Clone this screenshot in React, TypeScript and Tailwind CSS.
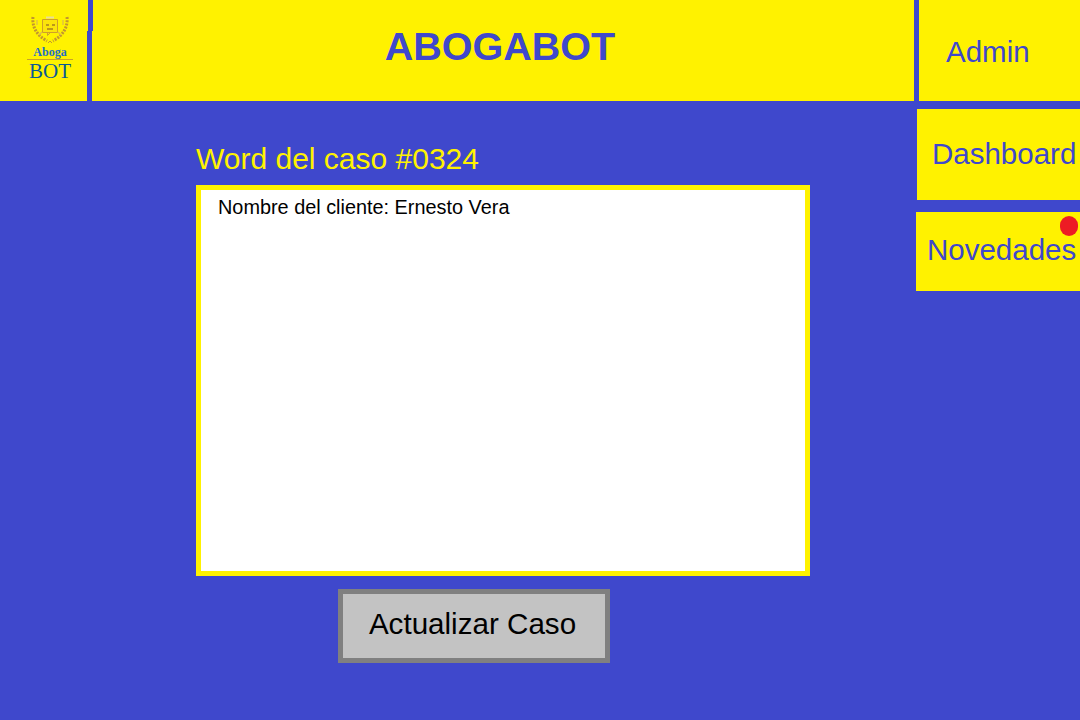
const SANS = "font-['Liberation_Sans',Arial,sans-serif]";

function Logo() {
  return (
    <div className="relative flex w-[87px] shrink-0 flex-col items-center bg-[#fff200] pt-[16px] pl-[13px]">
      {/* robot and laurel */}
      <svg width="40" height="29" viewBox="0 0 40 29" fill="none">
        <path d="M16 1.500h8" stroke="#e9dc9a" strokeWidth="2" />
        <path d="M12.500 3.500h15v13h-15zM17.500 16.500v3l3-3" stroke="#cf9f2a" strokeWidth="1" fill="#fbe40c" />
        <path d="M16 9h3M22 9h3M17 13h6" stroke="#a8801f" strokeWidth="1.500" />
        <g stroke="#c2952f" strokeWidth="3" strokeDasharray="2 1.200">
          <path d="M3 1c-1 9 3 18 14 24" />
          <path d="M37 1c1 9-3 18-14 24" />
        </g>
        <path d="M7 4v5M33 4v5M9 19l3-3M31 19l-3-3" stroke="#dcb94f" strokeWidth="1.200" />
        <path d="M18 27l2-2 2 2" stroke="#c2952f" strokeWidth="1" />
      </svg>
      <span className="mt-px font-['Liberation_Serif',serif] text-[12px] leading-[12px] font-bold text-[#1f6fc4]">
        Aboga
      </span>
      <div className="mt-[1px] h-px w-[46px] bg-[#c9a227]" />
      <span className="font-['Liberation_Serif',serif] text-[21px] leading-[22px] text-[#0a5a96]">
        BOT
      </span>
      {/* the divider steps by a pixel near the top */}
      <span className="absolute top-0 -right-px h-[31px] w-px bg-[#fff200]" />
      <span className="absolute top-0 -right-[6px] h-[31px] w-px bg-[#3f48cc]" />
    </div>
  );
}

export default function App() {
  return (
    <div className={`${SANS} flex h-[720px] w-[1080px] flex-col overflow-hidden bg-[#3f48cc]`}>
      {/* Header */}
      <header className="flex h-[101px] shrink-0 gap-[5px]">
        <Logo />
        <div className="flex flex-1 justify-center bg-[#fff200] pt-[21px] pr-[6px]">
          <h1 className="text-[39.500px] leading-[50px] font-bold text-[#3f48cc]">ABOGABOT</h1>
        </div>
        <div className="w-[161px] shrink-0 bg-[#fff200] pt-[33px] pl-[27px] text-[29.500px] leading-[38px] text-[#3f48cc]">
          Admin
        </div>
      </header>

      <div className="flex flex-1">
        {/* Word del caso */}
        <main className="w-[916px] shrink-0 pt-[40px] pl-[196px]">
          <h2 className="text-[30px] leading-[36px] text-[#fff200]">Word del caso #0324</h2>
          <div className="mt-[8px] h-[391px] w-[614px] border-[5px] border-[#fff200] bg-white px-[17px] py-[5px] text-[19.870px] leading-[24px] text-black">
            Nombre del cliente: Ernesto Vera
          </div>
          <button className="mt-[13px] ml-[142px] h-[74px] w-[272px] border-[5px] border-[#808080] bg-[#c3c3c3] pr-[3px] pb-[4px] text-[29.600px] leading-[36px] text-black">
            Actualizar Caso
          </button>
        </main>

        {/* Side menu */}
        <aside className="flex flex-1 flex-col items-end pt-[8px] text-[29.500px] text-[#3f48cc]">
          <a className="flex h-[91px] w-[163px] items-center bg-[#fff200] pl-[15px] whitespace-nowrap">
            Dashboard
          </a>
          <a className="relative mt-[12px] flex h-[79px] w-[164px] items-center bg-[#fff200] pb-[3px] pl-[11px] whitespace-nowrap">
            Novedades
            <span className="absolute top-[4px] right-[2px] h-[20px] w-[18px] rounded-full bg-[#ed1c24]" />
          </a>
        </aside>
      </div>
    </div>
  );
}
